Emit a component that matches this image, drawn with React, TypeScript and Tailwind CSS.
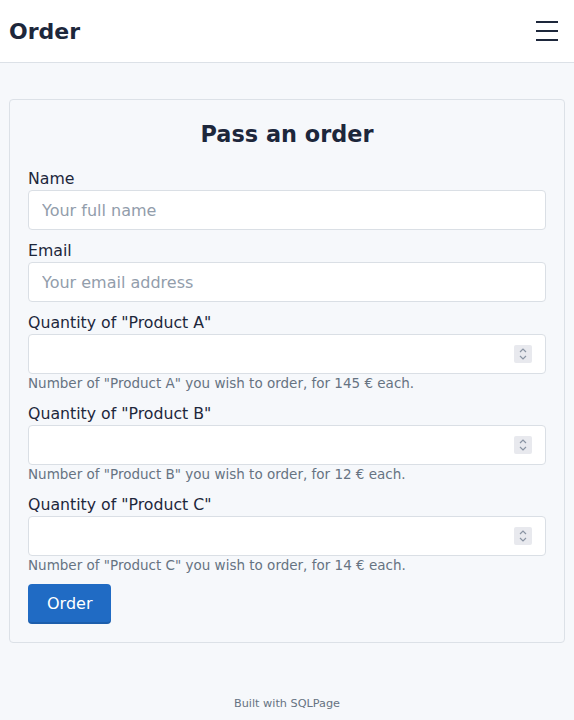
import React from "react";

const font = { fontFamily: '"DejaVu Sans", "Noto Sans", sans-serif' };

function Spinner() {
  return (
    <div className="absolute right-[14px] top-1/2 -translate-y-1/2 w-[18px] h-[18px] bg-[#e8e9ee] rounded-[2px] flex items-center justify-center">
      <svg width="10" height="14" viewBox="0 0 10 14" fill="none" stroke="#8a94a3" strokeWidth="1.2">
        <path d="M2 5 L5 2 L8 5" />
        <path d="M2 9 L5 12 L8 9" />
      </svg>
    </div>
  );
}

function Field({
  label,
  placeholder,
  hint,
  number,
}: {
  label: string;
  placeholder?: string;
  hint?: string;
  number?: boolean;
}) {
  return (
    <div className="mb-[8px]">
      <label className="block text-[15.75px] leading-[24px] pt-[1px] -mb-[1px] text-[#1d273b]">{label}</label>
      <div className="relative">
        <input
          type="text"
          placeholder={placeholder}
          className="w-full h-[40px] bg-white border border-[#dadfe5] rounded-[4px] px-[13px] text-[16px] text-[#1d273b] placeholder:text-[#929dab] outline-none"
          style={font}
        />
        {number && <Spinner />}
      </div>
      {hint && <p className="text-[13.5px] leading-[19px] text-[#667382]">{hint}</p>}
    </div>
  );
}

export default function App() {
  return (
    <div className="min-h-[720px] bg-[#f6f8fb] flex flex-col" style={font}>
      <header className="h-[63px] bg-white border-b border-[#dce1e7] flex items-center justify-between px-[9px]">
        <h1 className="text-[22px] font-bold text-[#1d273b]">Order</h1>
        <button className="w-[22px] h-[20px] mr-[7px] flex flex-col justify-between">
          <span className="block h-[2px] w-[22px] bg-[#1d273b]" />
          <span className="block h-[2px] w-[22px] bg-[#1d273b]" />
          <span className="block h-[2px] w-[22px] bg-[#1d273b]" />
        </button>
      </header>

      <main className="px-[9px] pt-[36px]">
        <form className="bg-[#f6f8fb] border border-[#dce1e7] rounded-[4px] px-[18px] pt-[17px] pb-[18px]">
          <h2 className="text-center text-[22.4px] leading-[34px] font-bold text-[#1d273b] mb-[15px]">Pass an order</h2>
          <Field label="Name" placeholder="Your full name" />
          <Field label="Email" placeholder="Your email address" />
          <Field
            label={'Quantity of "Product A"'}
            number
            hint={'Number of "Product A" you wish to order, for 145 € each.'}
          />
          <Field
            label={'Quantity of "Product B"'}
            number
            hint={'Number of "Product B" you wish to order, for 12 € each.'}
          />
          <Field
            label={'Quantity of "Product C"'}
            number
            hint={'Number of "Product C" you wish to order, for 14 € each.'}
          />
          <button
            type="button"
            className="mt-[1px] h-[40px] px-[19px] bg-[#206bc4] text-white text-[16px] rounded-[4px] shadow-[inset_0_-2px_0_rgba(0,0,0,0.12)]"
            style={font}
          >
            Order
          </button>
        </form>
      </main>

      <footer className="mt-auto pb-[8px] text-center text-[11.25px] leading-[16px] text-[#667382]">
        Built with SQLPage
      </footer>
    </div>
  );
}
